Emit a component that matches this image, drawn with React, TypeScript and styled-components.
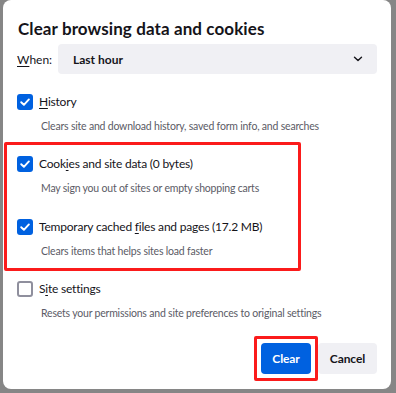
import React from "react";
import styled, { createGlobalStyle } from "styled-components";

const GlobalStyle = createGlobalStyle`
  html, body { margin: 0; padding: 0; background: #868686; }
  body { font-family: Lato, "Open Sans", Arial, sans-serif; color: #15141a; }
  * { box-sizing: border-box; }
`;

const Dialog = styled.div`
  width: 388px;
  height: 389px;
  margin-left: 3px;
  background: #ffffff;
  border-radius: 8px;
  padding: 16px 14px 0 14px;
  display: flex;
  flex-direction: column;
`;

const Title = styled.h1`
  margin: 0 0 0 1px;
  font-size: 17px;
  font-weight: 700;
  letter-spacing: 0.1px;
  line-height: 26px;
  color: #15141a;
  white-space: nowrap;
`;

const WhenRow = styled.div`
  margin-top: 2px;
  display: flex;
  align-items: center;
  gap: 8px;
`;

const WhenLabel = styled.span`
  font-size: 12px;
  width: 33px;
`;

const Select = styled.div`
  flex: 1;
  height: 30px;
  background: #f0f0f4;
  border-radius: 4px;
  display: flex;
  align-items: center;
  justify-content: space-between;
  padding: 0 14px 0 15px;
  font-size: 12px;
  font-weight: 700;
`;

const Options = styled.div`
  margin-top: 20px;
  display: flex;
  flex-direction: column;
`;

const Item = styled.div<{ $top?: number }>`
  display: flex;
  flex-direction: column;
  margin-top: ${(p) => p.$top ?? 0}px;
`;

const Row = styled.label`
  display: flex;
  align-items: center;
  gap: 6px;
  height: 16px;
  font-size: 12px;
  letter-spacing: -0.2px;
  line-height: 16px;
  white-space: nowrap;
`;

const Box = styled.span<{ $checked: boolean }>`
  width: 16px;
  height: 16px;
  flex: none;
  border-radius: 3px;
  display: flex;
  align-items: center;
  justify-content: center;
  background: ${(p) => (p.$checked ? "#0061e0" : "#ffffff")};
  border: ${(p) => (p.$checked ? "none" : "2px solid #8f8f9d")};
`;

const Desc = styled.div`
  margin: 8px 0 0 24px;
  font-size: 10.5px;
  letter-spacing: -0.2px;
  line-height: 16px;
  color: #5b5b66;
  white-space: nowrap;
`;

const U = styled.span`
  text-decoration: underline;
  text-underline-offset: 2px;
`;

const Highlight = styled.div`
  margin: 8px 0 0 -13px;
  width: 297px;
  border: 3px solid #fb1b1b;
  border-radius: 2px;
  padding: 11px 0 9px 10px;
  display: flex;
  flex-direction: column;
`;

const ButtonRow = styled.div`
  margin-top: 22px;
  display: flex;
  justify-content: flex-end;
  gap: 7px;
`;

const ButtonHighlight = styled.div`
  margin: -7px;
  padding: 4px;
  border: 3px solid #fb1b1b;
  border-radius: 2px;
  display: flex;
`;

const Button = styled.button<{ $primary?: boolean }>`
  height: 31px;
  width: ${(p) => (p.$primary ? 50 : 59)}px;
  border: none;
  border-radius: 4px;
  font-family: inherit;
  font-size: 12px;
  letter-spacing: -0.1px;
  font-weight: 700;
  padding: 0;
  background: ${(p) => (p.$primary ? "#0061e0" : "#f0f0f4")};
  color: ${(p) => (p.$primary ? "#ffffff" : "#15141a")};
`;

const Check = ({ checked }: { checked: boolean }) => (
  <Box $checked={checked}>
    {checked && (
      <svg width="12" height="12" viewBox="0 0 12 12">
        <path d="M2.2 6.2 L4.9 8.8 L9.9 3.4" fill="none" stroke="#fff" strokeWidth="1.9" strokeLinecap="round" strokeLinejoin="round" />
      </svg>
    )}
  </Box>
);

const Option = ({
  checked,
  label,
  desc,
  top,
}: {
  checked: boolean;
  label: React.ReactNode;
  desc: string;
  top?: number;
}) => (
  <Item $top={top}>
    <Row>
      <Check checked={checked} />
      <span>{label}</span>
    </Row>
    <Desc>{desc}</Desc>
  </Item>
);

export default function App() {
  return (
    <>
      <GlobalStyle />
      <Dialog>
        <Title>Clear browsing data and cookies</Title>
        <WhenRow>
          <WhenLabel>
            <U>W</U>hen:
          </WhenLabel>
          <Select>
            <span>Last hour</span>
            <svg width="10" height="6" viewBox="0 0 10 6">
              <path d="M1.5 1.2 L5 4.6 L8.5 1.2" fill="none" stroke="#15141a" strokeWidth="1.4" strokeLinecap="round" strokeLinejoin="round" />
            </svg>
          </Select>
        </WhenRow>
        <Options>
          <Option
            checked
            label={
              <>
                <U>H</U>istory
              </>
            }
            desc="Clears site and download history, saved form info, and searches"
          />
          <Highlight>
            <Option
              checked
              label={
                <>
                  Cook<U>i</U>es and site data (0 bytes)
                </>
              }
              desc="May sign you out of sites or empty shopping carts"
            />
            <Option
              checked
              top={23}
              label={
                <>
                  Temporary cached <U>f</U>iles and pages (17.2 MB)
                </>
              }
              desc="Clears items that helps sites load faster"
            />
          </Highlight>
          <Option
            checked={false}
            top={10}
            label={
              <>
                S<U>i</U>te settings
              </>
            }
            desc="Resets your permissions and site preferences to original settings"
          />
        </Options>
        <ButtonRow>
          <ButtonHighlight>
            <Button $primary>Clear</Button>
          </ButtonHighlight>
          <Button>Cancel</Button>
        </ButtonRow>
      </Dialog>
    </>
  );
}
